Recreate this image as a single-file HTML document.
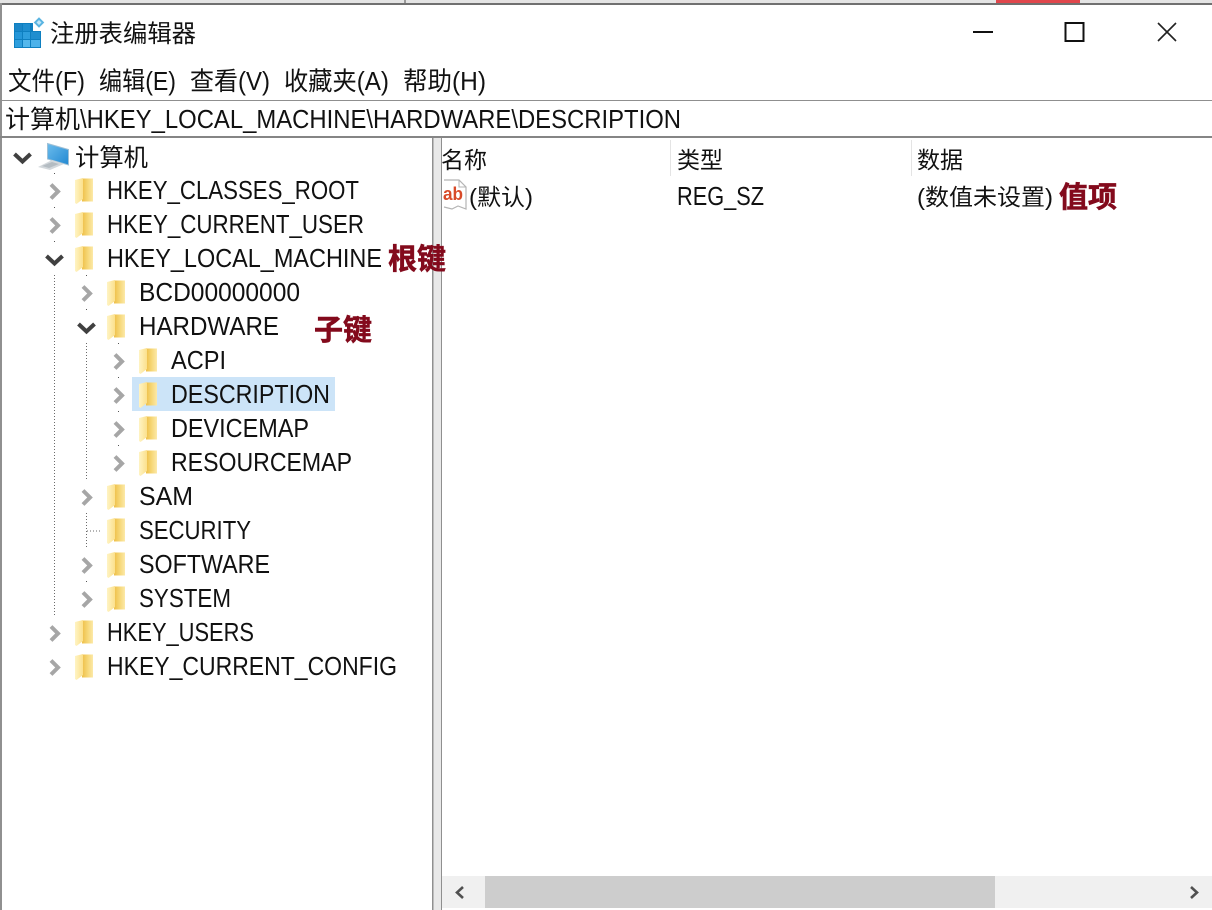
<!DOCTYPE html>
<html lang="zh"><head><meta charset="utf-8"><title>注册表编辑器</title>
<style>
html,body{margin:0;padding:0;background:#fff;width:1212px;height:910px;overflow:hidden}
svg{display:block}
text{font-family:"Liberation Sans","Noto Sans CJK SC",sans-serif;font-size:25.500px;fill:#111}
.cn{font-family:"Noto Sans CJK SC","Liberation Sans",sans-serif}
.red{font-family:"Noto Sans CJK SC",sans-serif;font-weight:700;font-size:29px;fill:#830a1c;stroke:#830a1c;stroke-width:.6px}
</style></head><body>
<svg width="1212" height="910" viewBox="0 0 1212 910" xmlns="http://www.w3.org/2000/svg">
<defs>
<linearGradient id="fa" x1="0" x2="1" y1="0" y2="0"><stop offset="0" stop-color="#fff4c4"/><stop offset="1" stop-color="#fbe08c"/></linearGradient>
<linearGradient id="fb" x1="0" x2="1" y1="0" y2="0"><stop offset="0" stop-color="#eebf48"/><stop offset=".5" stop-color="#f6d675"/><stop offset="1" stop-color="#fce9a8"/></linearGradient>
<linearGradient id="mon" x1="0" x2="1" y1="0" y2="1"><stop offset="0" stop-color="#6cbcec"/><stop offset="1" stop-color="#2288d2"/></linearGradient>
<g id="f">
<path d="M7 0.500H18V23.500H7Z" fill="url(#fb)"/>
<path d="M0 2 8 0V21L1.500 26 0 25Z" fill="url(#fa)"/>
</g>
<path id="r" d="M0 0 7 7 0 14" fill="none" stroke="#a6a6a6" stroke-width="4"/>
<path id="d" d="M0 0 8 7.500 16 0" fill="none" stroke="#404040" stroke-width="4"/>
</defs>

<!-- background strip above window -->
<rect x="0" y="0" width="1212" height="3" fill="#e4e4e4"/>
<rect x="996" y="0" width="84" height="3" fill="#e0464c"/>
<rect x="404" y="0" width="2" height="3" fill="#999"/>
<rect x="0" y="3" width="1212" height="2" fill="#707070"/>
<rect x="0" y="3" width="2" height="907" fill="#909090"/>

<!-- title icon -->
<g>
<path d="M14 23H33V31H41V48H14Z" fill="#0e7fc0"/>
<rect x="15" y="24" width="7" height="7" fill="#1a86c8"/><rect x="23" y="24" width="7" height="7" fill="#1f8ecf"/>
<rect x="15" y="32" width="7" height="7" fill="#2496d8"/><rect x="23" y="32" width="7" height="7" fill="#2e9edd"/><rect x="31" y="32" width="9" height="7" fill="#1f8ecf"/>
<rect x="15" y="40" width="7" height="7" fill="#2e9edd"/><rect x="23" y="40" width="7" height="7" fill="#55b8ec"/><rect x="31" y="40" width="9" height="7" fill="#4db2ea"/>
<path d="M39 16.500 45 22.500 39 28.500 33 22.500Z" fill="#5ab4e2" stroke="#fff" stroke-width="1"/>
<path d="M39 20 41.500 22.500 39 25 36.500 22.500Z" fill="#bfe6f8"/>
</g>
<text class="cn" x="50" y="42" textLength="146" lengthAdjust="spacingAndGlyphs" style="font-size:24.500px">注册表编辑器</text>

<!-- window controls -->
<rect x="973" y="31" width="20" height="2" fill="#111"/>
<rect x="1065.500" y="23" width="18" height="18" fill="none" stroke="#111" stroke-width="2"/>
<path d="M1158 23 1176 41M1176 23 1158 41" stroke="#222" stroke-width="1.600" fill="none"/>

<!-- menu -->
<text x="8" y="90" textLength="77" lengthAdjust="spacingAndGlyphs"><tspan class="cn">文件</tspan>(F)</text>
<text x="99" y="90" textLength="77" lengthAdjust="spacingAndGlyphs"><tspan class="cn">编辑</tspan>(E)</text>
<text x="190" y="90" textLength="80" lengthAdjust="spacingAndGlyphs"><tspan class="cn">查看</tspan>(V)</text>
<text x="284" y="90" textLength="105" lengthAdjust="spacingAndGlyphs"><tspan class="cn">收藏夹</tspan>(A)</text>
<text x="403" y="90" textLength="83" lengthAdjust="spacingAndGlyphs"><tspan class="cn">帮助</tspan>(H)</text>
<rect x="2" y="100" width="1210" height="1" fill="#8f8f8f"/>

<!-- address -->
<text class="cn" x="5" y="128" textLength="75" lengthAdjust="spacingAndGlyphs" style="font-size:25px">计算机</text>
<text x="80" y="128" textLength="601" lengthAdjust="spacingAndGlyphs">\HKEY_LOCAL_MACHINE\HARDWARE\DESCRIPTION</text>
<rect x="0" y="136" width="1212" height="2" fill="#858585"/>

<!-- splitter -->
<rect x="432" y="138" width="1.500" height="772" fill="#8f8f8f"/>
<rect x="433.500" y="138" width="7.500" height="772" fill="#e8e8e8"/>
<rect x="441" y="138" width="1" height="772" fill="#8f8f8f"/>

<!-- dotted lines -->
<path d="M54.500 275V616M86.500 343V480M86.500 513V548" stroke="#6a6a6a" stroke-width="1" stroke-dasharray="1 2" fill="none"/>
<path d="M87 531H102" stroke="#6a6a6a" stroke-width="1" stroke-dasharray="1 2" fill="none"/>
<g fill="#555">
<rect x="54" y="173" width="1" height="1"/><rect x="54" y="207" width="1" height="1"/><rect x="54" y="241" width="1" height="1"/>
<rect x="86" y="275" width="1" height="1"/><rect x="86" y="309" width="1" height="1"/><rect x="86" y="581" width="1" height="1"/>
<rect x="118" y="343" width="1" height="1"/><rect x="118" y="377" width="1" height="1"/><rect x="118" y="411" width="1" height="1"/><rect x="118" y="445" width="1" height="1"/>
</g>

<!-- selection -->
<rect x="132" y="377" width="203" height="34" fill="#cce4f8"/>

<!-- computer icon -->
<path d="M47.500 143.500 68.500 149.500V165L47.500 159Z" fill="url(#mon)" stroke="#9fc0d6" stroke-width="1"/>
<path d="M38 167 52 160 64 164 50 170Z" fill="#d3d8dc"/>
<path d="M42 166 52 162 59 164 49 168Z" fill="#b4bcc2"/>

<!-- chevrons -->
<use href="#d" x="14.500" y="154"/>
<use href="#r" x="51" y="184.500"/>
<use href="#r" x="51" y="218.500"/>
<use href="#d" x="46.500" y="256"/>
<use href="#r" x="83" y="286.500"/>
<use href="#d" x="78.500" y="324"/>
<use href="#r" x="115" y="354.500"/>
<use href="#r" x="115" y="388.500"/>
<use href="#r" x="115" y="422.500"/>
<use href="#r" x="115" y="456.500"/>
<use href="#r" x="83" y="490.500"/>
<use href="#r" x="83" y="558.500"/>
<use href="#r" x="83" y="592.500"/>
<use href="#r" x="51" y="626.500"/>
<use href="#r" x="51" y="660.500"/>

<!-- folders -->
<use href="#f" x="75" y="178"/>
<use href="#f" x="75" y="212"/>
<use href="#f" x="75" y="246"/>
<use href="#f" x="107" y="280"/>
<use href="#f" x="107" y="314"/>
<use href="#f" x="139" y="348"/>
<use href="#f" x="139" y="382"/>
<use href="#f" x="139" y="416"/>
<use href="#f" x="139" y="450"/>
<use href="#f" x="107" y="484"/>
<use href="#f" x="107" y="518"/>
<use href="#f" x="107" y="552"/>
<use href="#f" x="107" y="586"/>
<use href="#f" x="75" y="620"/>
<use href="#f" x="75" y="654"/>

<!-- tree text -->
<text class="cn" x="75" y="166" textLength="73" lengthAdjust="spacingAndGlyphs" style="font-size:24.500px">计算机</text>
<text x="107" y="199" textLength="252" lengthAdjust="spacingAndGlyphs">HKEY_CLASSES_ROOT</text>
<text x="107" y="233" textLength="257" lengthAdjust="spacingAndGlyphs">HKEY_CURRENT_USER</text>
<text x="107" y="267" textLength="275" lengthAdjust="spacingAndGlyphs">HKEY_LOCAL_MACHINE</text>
<text x="139" y="301" textLength="161" lengthAdjust="spacingAndGlyphs">BCD00000000</text>
<text x="139" y="335" textLength="140" lengthAdjust="spacingAndGlyphs">HARDWARE</text>
<text x="171" y="369" textLength="55" lengthAdjust="spacingAndGlyphs">ACPI</text>
<text x="171" y="403" textLength="159" lengthAdjust="spacingAndGlyphs">DESCRIPTION</text>
<text x="171" y="437" textLength="138" lengthAdjust="spacingAndGlyphs">DEVICEMAP</text>
<text x="171" y="471" textLength="181" lengthAdjust="spacingAndGlyphs">RESOURCEMAP</text>
<text x="139" y="505" textLength="54" lengthAdjust="spacingAndGlyphs">SAM</text>
<text x="139" y="539" textLength="112" lengthAdjust="spacingAndGlyphs">SECURITY</text>
<text x="139" y="573" textLength="131" lengthAdjust="spacingAndGlyphs">SOFTWARE</text>
<text x="139" y="607" textLength="92" lengthAdjust="spacingAndGlyphs">SYSTEM</text>
<text x="107" y="641" textLength="147" lengthAdjust="spacingAndGlyphs">HKEY_USERS</text>
<text x="107" y="675" textLength="290" lengthAdjust="spacingAndGlyphs">HKEY_CURRENT_CONFIG</text>

<!-- annotations -->
<text class="red" x="388" y="269">根键</text>
<text class="red" x="314" y="340">子键</text>
<text class="red" x="1059" y="207">值项</text>

<!-- list header -->
<text class="cn" x="441" y="168" style="font-size:23px">名称</text>
<text class="cn" x="677" y="168" style="font-size:23px">类型</text>
<text class="cn" x="917" y="168" style="font-size:23px">数据</text>
<rect x="670" y="140" width="1" height="36" fill="#e4e4e4"/>
<rect x="911" y="140" width="1" height="36" fill="#e4e4e4"/>

<!-- list row -->
<path d="M444 180H459L466 187V209L458 206 452 209 444 207" fill="#fff" stroke="#b4b4b4" stroke-width="1.200"/>
<path d="M459 180V187H466" fill="none" stroke="#b4b4b4" stroke-width="1"/>
<text x="443" y="200" style="font-size:18px;font-weight:700;fill:#d84a28" textLength="20" lengthAdjust="spacingAndGlyphs">ab</text>
<text x="469" y="205" textLength="64" lengthAdjust="spacingAndGlyphs" style="font-size:23px"><tspan>(</tspan><tspan class="cn">默认</tspan><tspan>)</tspan></text>
<text x="677" y="205" textLength="87" lengthAdjust="spacingAndGlyphs">REG_SZ</text>
<text x="917" y="205" textLength="136" lengthAdjust="spacingAndGlyphs" style="font-size:23px"><tspan>(</tspan><tspan class="cn">数值未设置</tspan><tspan>)</tspan></text>

<!-- scrollbar -->
<rect x="442" y="876" width="770" height="32" fill="#f0f0f0"/>
<rect x="485" y="876" width="510" height="32" fill="#cdcdcd"/>
<path d="M463 887 457 892.500 463 898" fill="none" stroke="#505050" stroke-width="2.600"/>
<path d="M1191 887 1197 892.500 1191 898" fill="none" stroke="#505050" stroke-width="2.600"/>
</svg>
</body></html>
